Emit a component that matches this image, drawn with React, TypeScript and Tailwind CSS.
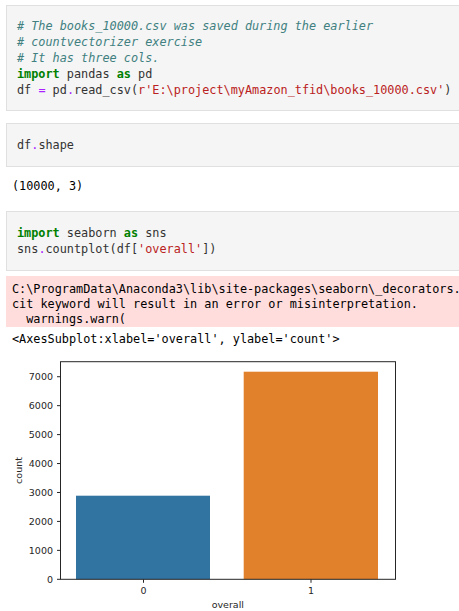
import React from 'react';

const monoBase = "font-['DejaVu_Sans_Mono',monospace] text-[11.83px] whitespace-pre";
const mono = `${monoBase} leading-[16px]`;

const Kw: React.FC<{ children: React.ReactNode }> = ({ children }) => (
  <span className="font-bold text-[#008000]">{children}</span>
);
const Op: React.FC<{ children: React.ReactNode }> = ({ children }) => (
  <span className="text-[#aa22ff]">{children}</span>
);
const Str: React.FC<{ children: React.ReactNode }> = ({ children }) => (
  <span className="text-[#ba2121]">{children}</span>
);
const Cm: React.FC<{ children: React.ReactNode }> = ({ children }) => (
  <span className="italic text-[#408080]">{children}</span>
);

const CodeCell: React.FC<{ children: React.ReactNode; className?: string }> = ({ children, className }) => (
  <div className={`w-[480px] bg-[#f5f5f5] border border-[#e0e0e0] pl-[10px] py-[12px] text-[#333] ${mono} ${className ?? ''}`}>
    {children}
  </div>
);

const ticks = [0, 1000, 2000, 3000, 4000, 5000, 6000, 7000];

// chart svg top sits at page y = 347
const Y0 = 579.3 - 347;
const PER = 28.94;

const Chart: React.FC = () => (
  <svg width="459" height="264" className="block" fontFamily="'DejaVu Sans', sans-serif">
    <rect x="76" y={495.7 - 347} width="134" height={579.3 - 495.7} fill="#3274a1" />
    <rect x="243.7" y={371.7 - 347} width="134.3" height={579.3 - 371.7} fill="#e1812c" />
    <rect x="60.5" y={361.7 - 347} width="335" height={Y0 - (361.7 - 347)} fill="none" stroke="#262626" strokeWidth="1" />
    {ticks.map((t, i) => {
      const y = Y0 - i * PER;
      return (
        <g key={t}>
          <line x1="57" x2="60.5" y1={y} y2={y} stroke="#262626" strokeWidth="1" />
          <text x="53" y={y + 3.4} fontSize="9.5" textAnchor="end" fill="#262626">{t}</text>
        </g>
      );
    })}
    <line x1="143.5" x2="143.5" y1={Y0} y2={Y0 + 3.5} stroke="#262626" strokeWidth="1" />
    <line x1="311" x2="311" y1={Y0} y2={Y0 + 3.5} stroke="#262626" strokeWidth="1" />
    <text x="143.5" y={594 - 347} fontSize="9.5" textAnchor="middle" fill="#262626">0</text>
    <text x="311" y={594 - 347} fontSize="9.5" textAnchor="middle" fill="#262626">1</text>
    <text x="227.8" y={608 - 347} fontSize="9.5" textAnchor="middle" fill="#262626">overall</text>
    <text x="0" y="0" fontSize="9.5" textAnchor="middle" fill="#262626" transform={`translate(21.5 ${470.5 - 347}) rotate(-90)`}>count</text>
  </svg>
);

export default function App() {
  return (
    <div className="w-[459px] h-[611px] overflow-hidden bg-white pl-[6px] pt-[5px]">
      <CodeCell>
        <div><Cm># The books_10000.csv was saved during the earlier</Cm></div>
        <div><Cm># countvectorizer exercise</Cm></div>
        <div><Cm># It has three cols.</Cm></div>
        <div><Kw>import</Kw> pandas <Kw>as</Kw> pd</div>
        <div>df <Op>=</Op> pd<Op>.</Op>read_csv(<Str>r'E:\project\myAmazon_tfid\books_10000.csv'</Str>)</div>
      </CodeCell>

      <CodeCell className="mt-[12px] py-[13px]">
        <div>df<Op>.</Op>shape</div>
      </CodeCell>

      <div className={`mt-[11px] pl-[6px] text-black ${mono}`}>(10000, 3)</div>

      <CodeCell className="mt-[17px] py-[13px]">
        <div><Kw>import</Kw> seaborn <Kw>as</Kw> sns</div>
        <div>sns<Op>.</Op>countplot(df[<Str>'overall'</Str>])</div>
      </CodeCell>

      <div className={`mt-[5px] w-[480px] bg-[#ffdddd] pl-[6px] pt-[6px] text-black ${monoBase} leading-[15px]`}>
        <div>{'C:\\ProgramData\\Anaconda3\\lib\\site-packages\\seaborn\\_decorators.'}</div>
        <div>cit keyword will result in an error or misinterpretation.</div>
        <div>  warnings.warn(</div>
      </div>

      <div className={`mt-[4px] pl-[6px] text-black ${mono}`}>{"<AxesSubplot:xlabel='overall', ylabel='count'>"}</div>

      <div className="-ml-[6px]">
        <Chart />
      </div>
    </div>
  );
}
